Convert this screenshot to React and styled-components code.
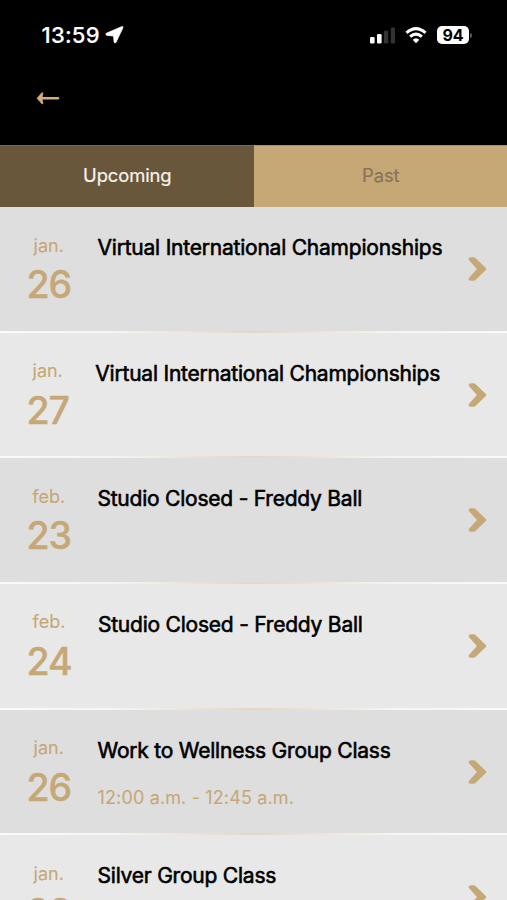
import React, { useState } from 'react'
import styled, { createGlobalStyle } from 'styled-components'

const GlobalStyle = createGlobalStyle`
    * {
        box-sizing:border-box;
    }

    body {
        margin:0;
        background-color:#000;
        font-family:Inter, "Liberation Sans", sans-serif;
    }
`

const Container = styled.div`
    width:100%;
    height:900px;
    display:flex;
    flex-direction:column;
    overflow:hidden;
    background-color:#e8e8e8;
`

const Header = styled.header`
    flex:none;
    height:144.5px;
    background-color:#000;
`

const StatusBar = styled.div`
    height:70px;
    padding:0 35px 0 41.5px;
    display:flex;
    align-items:center;
    justify-content:space-between;
`

const StatusGroup = styled.div`
    display:flex;
    align-items:center;
    gap:${props => props.$gap}px;
`

const Clock = styled.span`
    color:#fff;
    font-size:22px;
    font-weight:500;
    letter-spacing:0.25px;
    -webkit-text-stroke:0.2px #fff;
`

const Battery = styled.div`
    display:flex;
    align-items:center;
    gap:1px;
`

const BatteryBody = styled.span`
    width:32px;
    height:18px;
    border-radius:5px;
    background-color:#fff;
    color:#000;
    font-size:16px;
    font-weight:700;
    line-height:18.5px;
    text-align:center;
`

const BatteryTip = styled.span`
    width:2px;
    height:5px;
    border-radius:0 2px 2px 0;
    background-color:#555;
`

const BackButton = styled.button`
    display:block;
    margin:21px 0 0 36px;
    padding:0;
    border:none;
    background:none;
    line-height:0;
    cursor:pointer;
`

const Tabs = styled.div`
    flex:none;
    height:62.5px;
    display:flex;
`

const Tab = styled.button`
    flex:1;
    padding:0 0 2px 1px;
    border:none;
    border-top:1px solid ${props => props.$active ? "#79654a" : "#a98f68"};
    background-color:${props => props.$active ? "#69573b" : "#c6a877"};
    color:${props => props.$active ? "#f8f3ed" : "#8b7354"};
    font-family:inherit;
    font-size:18.4px;
    letter-spacing:-0.1px;
    -webkit-text-stroke:0.2px;
    cursor:pointer;
`

const List = styled.div`
    flex:1;
    min-height:0;
    overflow:hidden;
`

const Item = styled.div`
    height:125.65px;
    padding:0 20px 0 26.5px;
    display:flex;
    overflow:hidden;
    background-color:${props => props.$dark ? "#dedede" : "#e8e8e8"};
    border-bottom:2px solid;
    border-image:linear-gradient(90deg, #fafafa 0%, #f7f5f1 22%, #e5d6c0 50%, #f7f5f1 78%, #fafafa 100%) 1;
`

const DateBox = styled.div`
    margin-right:26.5px;
    padding-top:27.5px;
    text-align:center;
    color:#c6a877;
`

const Month = styled.div`
    font-size:18px;
    line-height:22px;
    -webkit-text-stroke:0.1px;
`

const Day = styled.div`
    margin-top:5.5px;
    font-size:37.5px;
    font-weight:500;
    line-height:46px;
    letter-spacing:-1.1px;
    -webkit-text-stroke:0.4px;
`

const Info = styled.div`
    flex:1;
    padding-top:28px;
    white-space:nowrap;
`

const Title = styled.div`
    color:#000;
    font-size:21px;
    line-height:26px;
    letter-spacing:-0.22px;
    -webkit-text-stroke:0.6px #000;
`

const Time = styled.div`
    margin-top:23px;
    color:#c6a877;
    font-size:18px;
    line-height:22px;
    letter-spacing:0.14px;
    -webkit-text-stroke:0.1px;
`

const Arrow = styled.div`
    flex:none;
    padding-top:50px;
    line-height:0;
`

const events = [
    { month:"jan.", day:"26", title:"Virtual International Championships" },
    { month:"jan.", day:"27", title:"Virtual International Championships" },
    { month:"feb.", day:"23", title:"Studio Closed - Freddy Ball" },
    { month:"feb.", day:"24", title:"Studio Closed - Freddy Ball" },
    { month:"jan.", day:"26", title:"Work to Wellness Group Class", time:"12:00 a.m. - 12:45 a.m." },
    { month:"jan.", day:"28", title:"Silver Group Class" },
]

function App() {
    const [tab,setTab] = useState("Upcoming");

    return (
        <Container>
            <GlobalStyle/>
            <Header>
                <StatusBar>
                    <StatusGroup $gap={5}>
                        <Clock>13:59</Clock>
                        <svg width="19" height="18" viewBox="0 0 19 18">
                            <path d="M1.5 7.2 16.6.7Q18.4.2 17.8 2L11 16.3Q9.6 18 9.1 16L8.6 10 2 9.4Q-.2 8.6 1.5 7.2Z" fill="#fff" stroke="#fff" strokeWidth="0.8"/>
                        </svg>
                    </StatusGroup>
                    <StatusGroup $gap={10}>
                        <svg width="26" height="17" viewBox="0 0 26 17">
                            <rect x="1" y="10" width="4.6" height="6.5" rx="1.3" fill="#fff"/>
                            <rect x="8" y="7" width="4.6" height="9.5" rx="1.3" fill="#fff"/>
                            <rect x="15" y="3.7" width="4.2" height="12.8" rx="1.3" fill="#333"/>
                            <rect x="21.8" y="0.5" width="4.2" height="16" rx="1.3" fill="#333"/>
                        </svg>
                        <svg width="22" height="17" viewBox="0 0 22 17">
                            <path d="M1.5 5.8Q11-2.6 20.5 5.8M5.1 9.7Q11 4.6 16.9 9.7" fill="none" stroke="#fff" strokeWidth="3"/>
                            <path d="M7.7 12.7Q11 9.7 14.3 12.7L11 16.2Z" fill="#fff"/>
                        </svg>
                        <Battery>
                            <BatteryBody>94</BatteryBody>
                            <BatteryTip/>
                        </Battery>
                    </StatusGroup>
                </StatusBar>
                <BackButton aria-label="Back">
                    <svg width="24" height="14" viewBox="0 0 24 14">
                        <path d="M5 7.3H22" stroke="#d4ad7c" strokeWidth="2.4" strokeLinecap="round"/>
                        <path d="M1 7.3 6 1.5 7 2 6 7.3 7 12.6 6 13Z" fill="#d4ad7c" stroke="#d4ad7c" strokeWidth="0.6" strokeLinejoin="round"/>
                    </svg>
                </BackButton>
            </Header>
            <Tabs>
                {["Upcoming", "Past"].map(name => (
                    <Tab key={name} $active={tab === name} onClick={() => setTab(name)}>{name}</Tab>
                ))}
            </Tabs>
            <List>
                {events.map((event, i) => (
                    <Item key={i} $dark={i % 2 === 0}>
                        <DateBox>
                            <Month>{event.month}</Month>
                            <Day>{event.day}</Day>
                        </DateBox>
                        <Info>
                            <Title>{event.title}</Title>
                            {event.time && <Time>{event.time}</Time>}
                        </Info>
                        <Arrow>
                            <svg width="19" height="24" viewBox="0 0 19 24">
                                <path d="M.9 3Q-.2.4 3 .3H5.5Q6.8.3 8 1.5L17.8 11Q18.8 12 17.8 13L8 22.5Q6.8 23.7 5.5 23.7H2.5Q-.2 23.6.9 21L8.9 12Z" fill="#c6a877"/>
                            </svg>
                        </Arrow>
                    </Item>
                ))}
            </List>
        </Container>
    )
}

export default App
